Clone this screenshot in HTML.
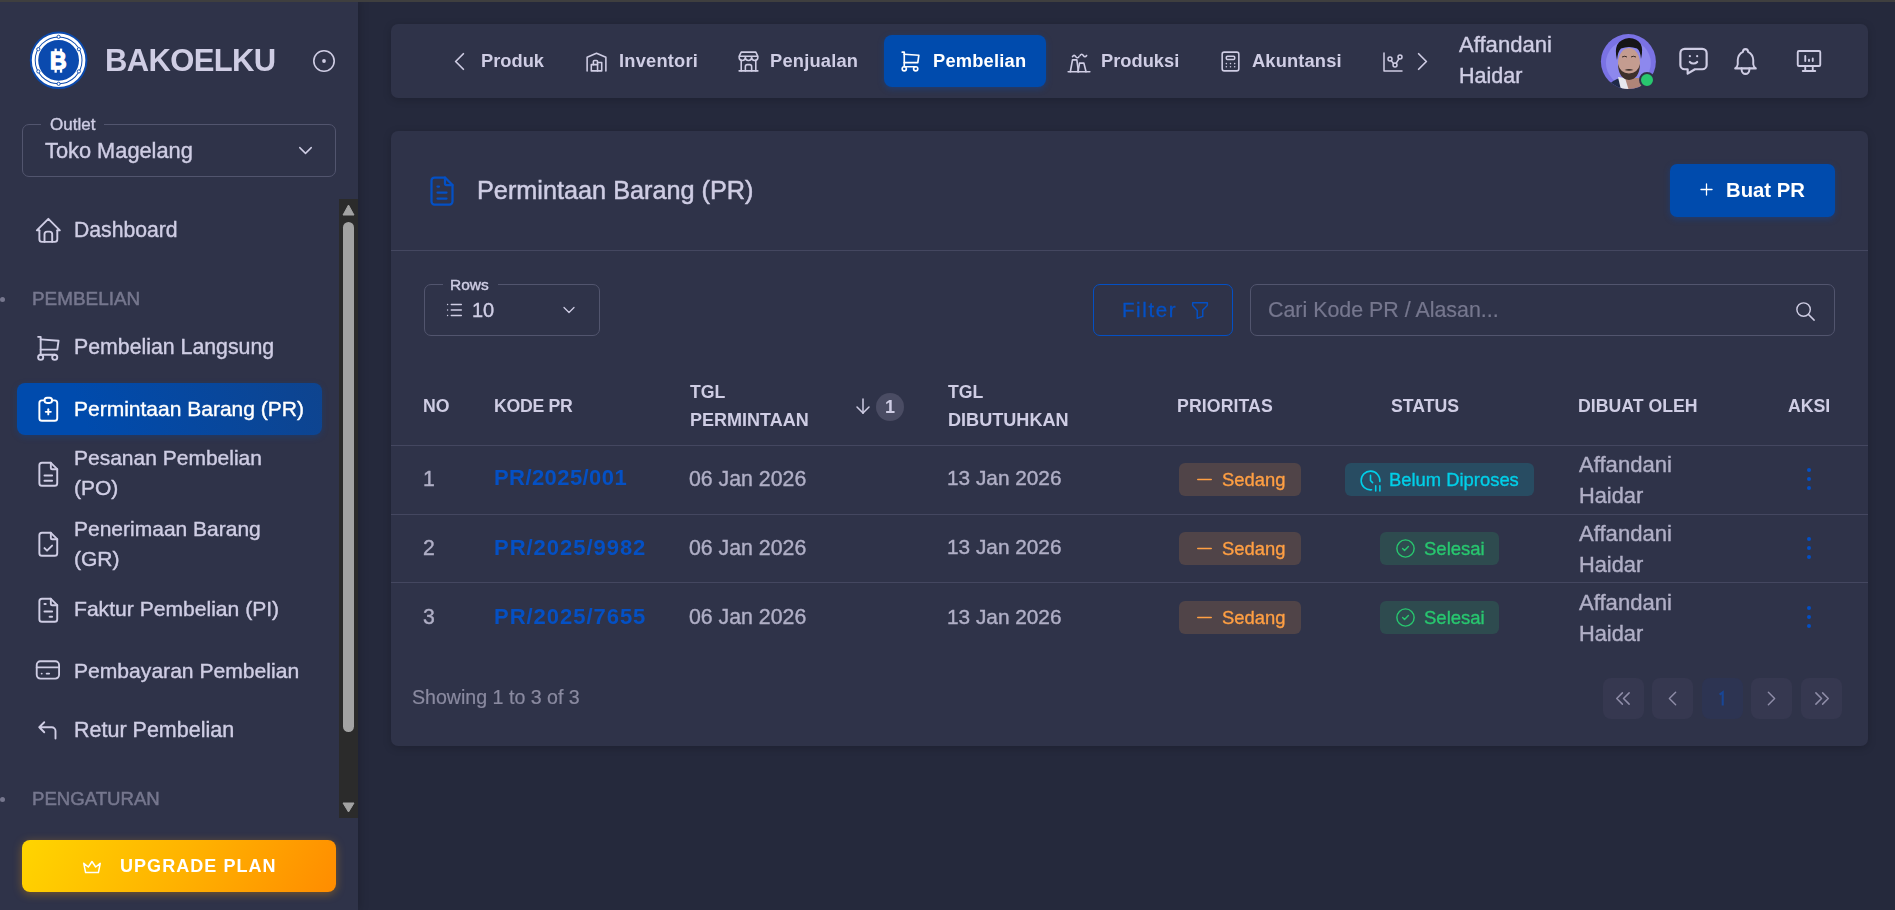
<!DOCTYPE html>
<html><head><meta charset="utf-8"><style>
html,body{margin:0;padding:0;width:1895px;height:910px;overflow:hidden;background:#25293C;font-family:"Liberation Sans",sans-serif;}
.t{position:absolute;white-space:nowrap;will-change:transform;}
.b{position:absolute;}
.i{position:absolute;overflow:visible;}
</style></head><body>
<div class="b" style="left:0;top:0;width:1895px;height:2px;background:#3F3F3F;z-index:10"></div>
<div class="b" style="left:0px;top:0px;width:358px;height:910px;background:#2F3349;box-shadow:0 0 10px rgba(0,0,0,.25);"></div><svg class="i" style="left:29px;top:31px" width="59" height="59" viewBox="0 0 59 59">
<circle cx="29.6" cy="29.3" r="28.8" fill="#0B4AAE"/>
<circle cx="29.6" cy="29.3" r="25.35" fill="none" stroke="#fff" stroke-width="2.9"/>
<circle cx="29.6" cy="29.3" r="21.65" fill="none" stroke="#fff" stroke-width="2.5"/>
<g fill="#fff" stroke="#0B4AAE" stroke-width="0.9">
<circle cx="29.6" cy="5.8" r="1.6"/><circle cx="29.6" cy="52.8" r="1.6"/>
<circle cx="9.3" cy="18.2" r="1.6"/><circle cx="49.9" cy="18.2" r="1.6"/>
<circle cx="9.3" cy="40.4" r="1.6"/><circle cx="49.9" cy="40.4" r="1.6"/>
</g>
<text x="29.4" y="37.8" text-anchor="middle" font-family="Liberation Sans" font-weight="700" font-size="23" fill="#fff" stroke="#fff" stroke-width="1.3">B</text>
<rect x="25.5" y="17.6" width="2.3" height="4" fill="#fff"/><rect x="30.9" y="17.6" width="2.3" height="4" fill="#fff"/>
<rect x="25.5" y="38" width="2.3" height="3.7" fill="#fff"/><rect x="30.9" y="38" width="2.3" height="3.7" fill="#fff"/>
</svg><div class="t" style="left:104.50px;top:45.45px;font-size:31px;line-height:31px;color:#CFCDE4;font-weight:700;letter-spacing:-0.65px;">BAKOELKU</div><svg class="i" style="left:312px;top:49px" width="24" height="24" viewBox="0 0 24 24" fill="none" stroke="#CFCDE4" stroke-width="1.6"><circle cx="12" cy="12" r="10.2"/><circle cx="12" cy="12" r="1.9" fill="#CFCDE4" stroke="none"/></svg><div class="b" style="left:22px;top:124px;width:314px;height:53px;border:1px solid #52556E;border-radius:7px;box-sizing:border-box;"></div><div class="b" style="left:41px;top:118px;width:63px;height:12px;background:#2F3349;"></div><div class="t" style="left:49.50px;top:115.88px;font-size:17px;line-height:17px;color:#CFCDE4;font-weight:400;letter-spacing:0px;-webkit-text-stroke:0.4px #CFCDE4;">Outlet</div><div class="t" style="left:45.20px;top:139.70px;font-size:21.8px;line-height:21.8px;color:#CFCDE4;font-weight:400;letter-spacing:0px;-webkit-text-stroke:0.4px #CFCDE4;">Toko Magelang</div><svg class="i" style="left:293.5px;top:139px;" width="23.0" height="23" viewBox="0 0 24 24" preserveAspectRatio="none" fill="none" stroke="#CFCDE4" stroke-width="1.5" stroke-linecap="round" stroke-linejoin="round"><path d="M6 9l6 6l6 -6"/></svg><div class="b" style="left:339px;top:199px;width:19px;height:619px;background:#2B2B2B;"></div><div class="b" style="left:343px;top:222px;width:11px;height:510px;background:#A3A3A3;border-radius:6px;"></div><svg class="i" style="left:339px;top:199px" width="19" height="619" viewBox="0 0 19 619"><path d="M9.5 6 L15 16 L4 16 Z" fill="#A3A3A3" stroke="#A3A3A3" stroke-width="1" stroke-linejoin="round"/><path d="M9.5 613 L15 604 L4 604 Z" fill="#A3A3A3" stroke="#A3A3A3" stroke-width="1" stroke-linejoin="round"/></svg><svg class="i" style="left:32.5px;top:214.5px;" width="30.700000000000003" height="30.69999999999999" viewBox="0 0 24 24" preserveAspectRatio="none" fill="none" stroke="#CFCDE4" stroke-width="1.5" stroke-linecap="round" stroke-linejoin="round"><path d="M5 12l-2 0l9 -9l9 9l-2 0"/><path d="M5 12v7a2 2 0 0 0 2 2h10a2 2 0 0 0 2 -2v-7"/><path d="M9 21v-6a2 2 0 0 1 2 -2h2a2 2 0 0 1 2 2v6"/></svg><div class="t" style="left:73.50px;top:219.29px;font-size:21.2px;line-height:21.2px;color:#CFCDE4;font-weight:400;letter-spacing:0px;-webkit-text-stroke:0.4px #CFCDE4;">Dashboard</div><div class="b" style="left:0px;top:297px;width:5px;height:5px;background:#76778E;border-radius:50%;"></div><div class="t" style="left:32.00px;top:289.60px;font-size:18.9px;line-height:18.9px;color:#76778E;font-weight:400;letter-spacing:0px;-webkit-text-stroke:0.5px #76778E;">PEMBELIAN</div><svg class="i" style="left:32.5px;top:332.5px;" width="30.700000000000003" height="30.69999999999999" viewBox="0 0 24 24" preserveAspectRatio="none" fill="none" stroke="#CFCDE4" stroke-width="1.5" stroke-linecap="round" stroke-linejoin="round"><path d="M6 19m-2 0a2 2 0 1 0 4 0a2 2 0 1 0 -4 0"/><path d="M17 19m-2 0a2 2 0 1 0 4 0a2 2 0 1 0 -4 0"/><path d="M17 17h-11v-14h-2"/><path d="M6 5l14 1l-1 7h-13"/></svg><div class="t" style="left:73.50px;top:337.41px;font-size:21.3px;line-height:21.3px;color:#CFCDE4;font-weight:400;letter-spacing:0px;-webkit-text-stroke:0.4px #CFCDE4;">Pembelian Langsung</div><div class="b" style="left:17px;top:383px;width:305px;height:52px;background:linear-gradient(72.5deg,#004BAD 22%,#0E448F 100%);border-radius:8px;box-shadow:0 2px 6px rgba(0,75,173,.3);"></div><svg class="i" style="left:32.7px;top:393.6px;" width="30.599999999999994" height="30.599999999999966" viewBox="0 0 24 24" preserveAspectRatio="none" fill="none" stroke="#FFFFFF" stroke-width="1.5" stroke-linecap="round" stroke-linejoin="round"><path d="M9 5h-2a2 2 0 0 0 -2 2v12a2 2 0 0 0 2 2h10a2 2 0 0 0 2 -2v-12a2 2 0 0 0 -2 -2h-2"/><path d="M9 3m0 2a2 2 0 0 1 2 -2h2a2 2 0 0 1 2 2v0a2 2 0 0 1 -2 2h-2a2 2 0 0 1 -2 -2z"/><path d="M10 14h4"/><path d="M12 12v4"/></svg><div class="t" style="left:73.50px;top:397.76px;font-size:21px;line-height:21px;color:#FFFFFF;font-weight:400;letter-spacing:0px;-webkit-text-stroke:0.4px #fff;">Permintaan Barang (PR)</div><svg class="i" style="left:32.7px;top:458.8px;" width="30.599999999999994" height="30.599999999999966" viewBox="0 0 24 24" preserveAspectRatio="none" fill="none" stroke="#CFCDE4" stroke-width="1.5" stroke-linecap="round" stroke-linejoin="round"><path d="M14 3v4a1 1 0 0 0 1 1h4"/><path d="M17 21h-10a2 2 0 0 1 -2 -2v-14a2 2 0 0 1 2 -2h7l5 5v11a2 2 0 0 1 -2 2z"/><path d="M9 13l6 0"/><path d="M9 17l6 0"/></svg><div class="t" style="left:73.50px;top:447.36px;font-size:21px;line-height:21px;color:#CFCDE4;font-weight:400;letter-spacing:0px;-webkit-text-stroke:0.4px #CFCDE4;">Pesanan Pembelian</div><div class="t" style="left:73.50px;top:477.46px;font-size:21px;line-height:21px;color:#CFCDE4;font-weight:400;letter-spacing:0px;-webkit-text-stroke:0.4px #CFCDE4;">(PO)</div><svg class="i" style="left:32.7px;top:528.6px;" width="30.599999999999994" height="30.600000000000023" viewBox="0 0 24 24" preserveAspectRatio="none" fill="none" stroke="#CFCDE4" stroke-width="1.5" stroke-linecap="round" stroke-linejoin="round"><path d="M14 3v4a1 1 0 0 0 1 1h4"/><path d="M17 21h-10a2 2 0 0 1 -2 -2v-14a2 2 0 0 1 2 -2h7l5 5v11a2 2 0 0 1 -2 2z"/><path d="M9 15l2 2l4 -4"/></svg><div class="t" style="left:73.50px;top:518.06px;font-size:21px;line-height:21px;color:#CFCDE4;font-weight:400;letter-spacing:0px;-webkit-text-stroke:0.4px #CFCDE4;">Penerimaan Barang</div><div class="t" style="left:73.50px;top:547.86px;font-size:21px;line-height:21px;color:#CFCDE4;font-weight:400;letter-spacing:0px;-webkit-text-stroke:0.4px #CFCDE4;">(GR)</div><svg class="i" style="left:32.7px;top:594.6px;" width="30.599999999999994" height="30.600000000000023" viewBox="0 0 24 24" preserveAspectRatio="none" fill="none" stroke="#CFCDE4" stroke-width="1.5" stroke-linecap="round" stroke-linejoin="round"><path d="M14 3v4a1 1 0 0 0 1 1h4"/><path d="M17 21h-10a2 2 0 0 1 -2 -2v-14a2 2 0 0 1 2 -2h7l5 5v11a2 2 0 0 1 -2 2z"/><path d="M9 7l1 0"/><path d="M9 13l6 0"/><path d="M13 17l2 0"/></svg><div class="t" style="left:73.50px;top:597.78px;font-size:21.1px;line-height:21.1px;color:#CFCDE4;font-weight:400;letter-spacing:0px;-webkit-text-stroke:0.4px #CFCDE4;">Faktur Pembelian (PI)</div><svg class="i" style="left:33.2px;top:654.9px;" width="29.799999999999997" height="29.800000000000068" viewBox="0 0 24 24" preserveAspectRatio="none" fill="none" stroke="#CFCDE4" stroke-width="1.5" stroke-linecap="round" stroke-linejoin="round"><path d="M3 5m0 3a3 3 0 0 1 3 -3h12a3 3 0 0 1 3 3v8a3 3 0 0 1 -3 3h-12a3 3 0 0 1 -3 -3z"/><path d="M3 10l18 0"/><path d="M7 15l.01 0"/><path d="M11 15l2 0"/></svg><div class="t" style="left:73.50px;top:659.68px;font-size:21.1px;line-height:21.1px;color:#CFCDE4;font-weight:400;letter-spacing:0px;-webkit-text-stroke:0.4px #CFCDE4;">Pembayaran Pembelian</div><svg class="i" style="left:32.5px;top:715.5px;" width="30.0" height="30.0" viewBox="0 0 24 24" preserveAspectRatio="none" fill="none" stroke="#CFCDE4" stroke-width="1.5" stroke-linecap="round" stroke-linejoin="round"><path d="M18 18v-6a3 3 0 0 0 -3 -3h-10l4 -4m0 8l-4 -4"/></svg><div class="t" style="left:73.50px;top:719.74px;font-size:21.5px;line-height:21.5px;color:#CFCDE4;font-weight:400;letter-spacing:0px;-webkit-text-stroke:0.4px #CFCDE4;">Retur Pembelian</div><div class="b" style="left:0px;top:797px;width:5px;height:5px;background:#76778E;border-radius:50%;"></div><div class="t" style="left:32.00px;top:789.95px;font-size:18.6px;line-height:18.6px;color:#76778E;font-weight:400;letter-spacing:0px;-webkit-text-stroke:0.5px #76778E;">PENGATURAN</div><div class="b" style="left:22px;top:840px;width:314px;height:52px;background:linear-gradient(120deg,#FFD500 0%,#FFB300 50%,#FF8C00 100%);border-radius:8px;box-shadow:0 2px 10px rgba(255,160,0,.35);"></div><svg class="i" style="left:81px;top:856px;" width="22" height="22" viewBox="0 0 24 24" preserveAspectRatio="none" fill="none" stroke="#FFFFFF" stroke-width="1.6" stroke-linecap="round" stroke-linejoin="round"><path d="M12 6l4 6l5 -4l-2 10h-14l-2 -10l5 4z"/></svg><div class="t" style="left:119.70px;top:857.05px;font-size:18px;line-height:18px;color:#FFFFFF;font-weight:700;letter-spacing:1.05px;">UPGRADE PLAN</div><div class="b" style="left:391px;top:24px;width:1477px;height:74px;background:#2F3349;border-radius:7px;box-shadow:0 2px 8px rgba(0,0,0,.18);"></div><svg class="i" style="left:443.5px;top:46px;" width="31.0" height="31" viewBox="0 0 24 24" preserveAspectRatio="none" fill="none" stroke="#CFCDE4" stroke-width="1.35" stroke-linecap="round" stroke-linejoin="round"><path d="M15 6l-6 6l6 6"/></svg><div class="t" style="left:480.50px;top:52.10px;font-size:18.3px;line-height:18.3px;color:#CFCDE4;font-weight:700;letter-spacing:0px;">Produk</div><svg class="i" style="left:584px;top:48.6px;" width="25" height="24.999999999999993" viewBox="0 0 24 24" preserveAspectRatio="none" fill="none" stroke="#CFCDE4" stroke-width="1.5" stroke-linecap="round" stroke-linejoin="round"><path d="M3 21v-13l9 -4l9 4v13"/><path d="M13 13h4v8h-10v-6h6"/><path d="M13 21v-9a1 1 0 0 0 -1 -1h-2a1 1 0 0 0 -1 1v3"/></svg><div class="t" style="left:618.60px;top:52.10px;font-size:18.3px;line-height:18.3px;color:#CFCDE4;font-weight:700;letter-spacing:0.2px;">Inventori</div><svg class="i" style="left:736px;top:49px;" width="25" height="25" viewBox="0 0 24 24" preserveAspectRatio="none" fill="none" stroke="#CFCDE4" stroke-width="1.5" stroke-linecap="round" stroke-linejoin="round"><path d="M3 21l18 0"/><path d="M3 7v1a3 3 0 0 0 6 0v-1m0 1a3 3 0 0 0 6 0v-1m0 1a3 3 0 0 0 6 0v-1h-18l2 -4h14l2 4"/><path d="M5 21l0 -10.15"/><path d="M19 21l0 -10.15"/><path d="M9 21v-4a2 2 0 0 1 2 -2h2a2 2 0 0 1 2 2v4"/></svg><div class="t" style="left:770.20px;top:52.10px;font-size:18.3px;line-height:18.3px;color:#CFCDE4;font-weight:700;letter-spacing:0.2px;">Penjualan</div><div class="b" style="left:884px;top:35px;width:162px;height:52px;background:#004BAD;border-radius:8px;box-shadow:0 2px 6px rgba(11,74,174,.4);"></div><svg class="i" style="left:898px;top:49px;" width="25" height="25" viewBox="0 0 24 24" preserveAspectRatio="none" fill="none" stroke="#FFFFFF" stroke-width="1.6" stroke-linecap="round" stroke-linejoin="round"><path d="M6 19m-2 0a2 2 0 1 0 4 0a2 2 0 1 0 -4 0"/><path d="M17 19m-2 0a2 2 0 1 0 4 0a2 2 0 1 0 -4 0"/><path d="M17 17h-11v-14h-2"/><path d="M6 5l14 1l-1 7h-13"/></svg><div class="t" style="left:932.60px;top:52.10px;font-size:18.3px;line-height:18.3px;color:#FFFFFF;font-weight:700;letter-spacing:0.2px;">Pembelian</div><svg class="i" style="left:1066px;top:49px;" width="26" height="26" viewBox="0 0 24 24" preserveAspectRatio="none" fill="none" stroke="#CFCDE4" stroke-width="1.5" stroke-linecap="round" stroke-linejoin="round"><path d="M2 21h20"/><path d="M4 21l2 -11h4l1.5 11"/><path d="M11 21l1.5 -8h4l2 8"/><path d="M6 7c1 -1.5 2 -1.5 3 0s2 1.5 3 0"/><path d="M13 6c1 -1.5 2 -1.5 3 0s2 1.5 3 0"/></svg><div class="t" style="left:1100.50px;top:52.10px;font-size:18.3px;line-height:18.3px;color:#CFCDE4;font-weight:700;letter-spacing:0px;">Produksi</div><svg class="i" style="left:1218px;top:49px;" width="25" height="25" viewBox="0 0 24 24" preserveAspectRatio="none" fill="none" stroke="#CFCDE4" stroke-width="1.5" stroke-linecap="round" stroke-linejoin="round"><path d="M4 3m0 2a2 2 0 0 1 2 -2h12a2 2 0 0 1 2 2v14a2 2 0 0 1 -2 2h-12a2 2 0 0 1 -2 -2z"/><path d="M8 7m0 1a1 1 0 0 1 1 -1h6a1 1 0 0 1 1 1v1a1 1 0 0 1 -1 1h-6a1 1 0 0 1 -1 -1z"/><path d="M8 14l0 .01"/><path d="M12 14l0 .01"/><path d="M16 14l0 .01"/><path d="M8 17l0 .01"/><path d="M12 17l0 .01"/><path d="M16 17l0 .01"/></svg><div class="t" style="left:1252.20px;top:52.10px;font-size:18.3px;line-height:18.3px;color:#CFCDE4;font-weight:700;letter-spacing:0.15px;">Akuntansi</div><svg class="i" style="left:1381px;top:50px;" width="24" height="24" viewBox="0 0 24 24" preserveAspectRatio="none" fill="none" stroke="#CFCDE4" stroke-width="1.5" stroke-linecap="round" stroke-linejoin="round"><path d="M3 3v18h18"/><path d="M9 9m-2 0a2 2 0 1 0 4 0a2 2 0 1 0 -4 0"/><path d="M19 7m-2 0a2 2 0 1 0 4 0a2 2 0 1 0 -4 0"/><path d="M14 15m-2 0a2 2 0 1 0 4 0a2 2 0 1 0 -4 0"/><path d="M10.16 10.62l2.34 2.88"/><path d="M15.088 13.328l2.837 -4.586"/></svg><svg class="i" style="left:1407px;top:46px;" width="31" height="31" viewBox="0 0 24 24" preserveAspectRatio="none" fill="none" stroke="#CFCDE4" stroke-width="1.35" stroke-linecap="round" stroke-linejoin="round"><path d="M9 6l6 6l-6 6"/></svg><div class="t" style="left:1459.00px;top:34.25px;font-size:22.1px;line-height:22.1px;color:#CFCDE4;font-weight:400;letter-spacing:0px;-webkit-text-stroke:0.4px #CFCDE4;">Affandani</div><div class="t" style="left:1459.00px;top:65.94px;font-size:21.5px;line-height:21.5px;color:#CFCDE4;font-weight:400;letter-spacing:0px;-webkit-text-stroke:0.4px #CFCDE4;">Haidar</div><svg class="i" style="left:1600px;top:34px" width="57" height="57" viewBox="0 0 57 57">
<defs><clipPath id="av"><circle cx="28.4" cy="27.6" r="27.5"/></clipPath></defs>
<circle cx="28.4" cy="27.6" r="27.5" fill="#7A72E4"/>
<g clip-path="url(#av)">
<circle cx="28.4" cy="29" r="22.5" fill="#8D88EE"/>
<path d="M24 44 L41 44 L46 60 L22 60 Z" fill="#B08578"/>
<path d="M4 60 Q6 50 17 45 L21 44 L26 60 Z" fill="#1F2A48"/>
<path d="M18 43 L25 44 L30 60 L22 60 Z" fill="#E8E8EE"/>
<ellipse cx="29" cy="29" rx="11" ry="15" fill="#C49C90"/>
<path d="M18 30 Q18.5 45 29 46 Q39.5 45 40 30 Q38 39 29 39.5 Q20 39 18 30 Z" fill="#3E302C"/>
<path d="M24.5 36 Q29 34 33.5 36 Q29 37.5 24.5 36Z" fill="#3E302C"/>
<path d="M17 26 Q12 6 29 4 Q46 5 41 25 Q40.5 17 37 14.5 Q29 11.5 21 14.5 Q18 17 17 26 Z" fill="#161517"/>
<path d="M22 23 Q25 21.5 27 23" stroke="#3a2b26" stroke-width="1" fill="none"/><path d="M31 23 Q33 21.5 36 23" stroke="#3a2b26" stroke-width="1" fill="none"/>
</g>
</svg><div class="b" style="left:1638.5px;top:71.5px;width:16.0px;height:16.0px;background:#28C76F;border:2.5px solid #2F3349;border-radius:50%;box-sizing:border-box;"></div><svg class="i" style="left:1676px;top:43.2px;" width="35" height="35.0" viewBox="0 0 24 24" preserveAspectRatio="none" fill="none" stroke="#CFCDE4" stroke-width="1.5" stroke-linecap="round" stroke-linejoin="round"><path d="M18 4a3 3 0 0 1 3 3v8a3 3 0 0 1 -3 3h-5l-5 3v-3h-2a3 3 0 0 1 -3 -3v-8a3 3 0 0 1 3 -3h12z"/><path d="M9.5 9h.01"/><path d="M14.5 9h.01"/><path d="M9.5 13a3.5 3.5 0 0 0 5 0"/></svg><svg class="i" style="left:1730px;top:45px;" width="31" height="33" viewBox="0 0 24 24" preserveAspectRatio="none" fill="none" stroke="#CFCDE4" stroke-width="1.5" stroke-linecap="round" stroke-linejoin="round"><path d="M10 5a2 2 0 1 1 4 0a7 7 0 0 1 4 6v3a4 4 0 0 0 2 3h-16a4 4 0 0 0 2 -3v-3a7 7 0 0 1 4 -6"/><path d="M9 17v1a3 3 0 0 0 6 0v-1"/></svg><svg class="i" style="left:1794px;top:46.2px;" width="30" height="30.0" viewBox="0 0 24 24" preserveAspectRatio="none" fill="none" stroke="#CFCDE4" stroke-width="1.5" stroke-linecap="round" stroke-linejoin="round"><path d="M3 4m0 1a1 1 0 0 1 1 -1h16a1 1 0 0 1 1 1v10a1 1 0 0 1 -1 1h-16a1 1 0 0 1 -1 -1z"/><path d="M7 20h10"/><path d="M9 16v4"/><path d="M15 16v4"/><path d="M9 12v-4"/><path d="M12 12v-1"/><path d="M15 12v-2"/></svg><div class="b" style="left:391px;top:131px;width:1477px;height:615px;background:#2F3349;border-radius:7px;box-shadow:0 2px 8px rgba(0,0,0,.18);"></div><svg class="i" style="left:424px;top:173px;" width="36" height="36" viewBox="0 0 24 24" preserveAspectRatio="none" fill="none" stroke="#0450C4" stroke-width="1.5" stroke-linecap="round" stroke-linejoin="round"><path d="M14 3v4a1 1 0 0 0 1 1h4"/><path d="M17 21h-10a2 2 0 0 1 -2 -2v-14a2 2 0 0 1 2 -2h7l5 5v11a2 2 0 0 1 -2 2z"/><path d="M9 9l1 0"/><path d="M9 13l6 0"/><path d="M9 17l6 0"/></svg><div class="t" style="left:477.00px;top:177.53px;font-size:25.25px;line-height:25.25px;color:#CFCDE4;font-weight:400;letter-spacing:0px;-webkit-text-stroke:0.5px #CFCDE4;">Permintaan Barang (PR)</div><div class="b" style="left:1670px;top:164px;width:165px;height:53px;background:#004BAD;border-radius:7px;box-shadow:0 2px 6px rgba(11,74,174,.4);"></div><svg class="i" style="left:1696.5px;top:180px;" width="19.0" height="19" viewBox="0 0 24 24" preserveAspectRatio="none" fill="none" stroke="#FFFFFF" stroke-width="1.6" stroke-linecap="round" stroke-linejoin="round"><path d="M12 5l0 14"/><path d="M5 12l14 0"/></svg><div class="t" style="left:1725.50px;top:180.24px;font-size:20.3px;line-height:20.3px;color:#FFFFFF;font-weight:700;letter-spacing:0px;">Buat PR</div><div class="b" style="left:391px;top:250px;width:1477px;height:1px;background:#444760;"></div><div class="b" style="left:424px;top:284px;width:176px;height:52px;border:1px solid #52556E;border-radius:7px;box-sizing:border-box;"></div><div class="b" style="left:443px;top:278px;width:55px;height:12px;background:#2F3349;"></div><div class="t" style="left:450.00px;top:277.13px;font-size:15.5px;line-height:15.5px;color:#CFCDE4;font-weight:400;letter-spacing:0px;-webkit-text-stroke:0.4px #CFCDE4;">Rows</div><svg class="i" style="left:443px;top:299px;" width="22" height="22" viewBox="0 0 24 24" preserveAspectRatio="none" fill="none" stroke="#CFCDE4" stroke-width="1.5" stroke-linecap="round" stroke-linejoin="round"><path d="M9 6l11 0"/><path d="M9 12l11 0"/><path d="M9 18l11 0"/><path d="M5 6l0 .01"/><path d="M5 12l0 .01"/><path d="M5 18l0 .01"/></svg><div class="t" style="left:471.50px;top:300.19px;font-size:20px;line-height:20px;color:#CFCDE4;font-weight:400;letter-spacing:0px;-webkit-text-stroke:0.4px #CFCDE4;">10</div><svg class="i" style="left:559px;top:300px;" width="20" height="20" viewBox="0 0 24 24" preserveAspectRatio="none" fill="none" stroke="#CFCDE4" stroke-width="1.5" stroke-linecap="round" stroke-linejoin="round"><path d="M6 9l6 6l6 -6"/></svg><div class="b" style="left:1093px;top:284px;width:140px;height:52px;border:1.5px solid #0450C4;border-radius:7px;box-sizing:border-box;"></div><div class="t" style="left:1122.30px;top:300.17px;font-size:20.5px;line-height:20.5px;color:#0450C4;font-weight:400;letter-spacing:1.6px;-webkit-text-stroke:0.3px #0450C4;">Filter</div><svg class="i" style="left:1189px;top:298.6px;" width="22" height="22.0" viewBox="0 0 24 24" preserveAspectRatio="none" fill="none" stroke="#0450C4" stroke-width="1.6" stroke-linecap="round" stroke-linejoin="round"><path d="M4 4h16v2.172a2 2 0 0 1 -.586 1.414l-4.414 4.414v7l-6 2v-8.5l-4.48 -4.928a2 2 0 0 1 -.52 -1.345v-2.227z"/></svg><div class="b" style="left:1250px;top:284px;width:585px;height:52px;border:1px solid #52556E;border-radius:7px;box-sizing:border-box;"></div><div class="t" style="left:1268.30px;top:299.73px;font-size:21.4px;line-height:21.4px;color:#76778E;font-weight:400;letter-spacing:0px;-webkit-text-stroke:0.2px #76778E;">Cari Kode PR / Alasan...</div><svg class="i" style="left:1794px;top:299.5px;" width="23" height="23.0" viewBox="0 0 24 24" preserveAspectRatio="none" fill="none" stroke="#CFCDE4" stroke-width="1.5" stroke-linecap="round" stroke-linejoin="round"><path d="M10 10m-7 0a7 7 0 1 0 14 0a7 7 0 1 0 -14 0"/><path d="M21 21l-6 -6"/></svg><div class="t" style="left:422.50px;top:398.10px;font-size:17.7px;line-height:17.7px;color:#CFCDE4;font-weight:700;letter-spacing:0px;">NO</div><div class="t" style="left:494.00px;top:398.10px;font-size:17.7px;line-height:17.7px;color:#CFCDE4;font-weight:700;letter-spacing:-0.3px;">KODE PR</div><div class="t" style="left:689.50px;top:384.40px;font-size:17.7px;line-height:17.7px;color:#CFCDE4;font-weight:700;letter-spacing:0px;">TGL</div><div class="t" style="left:689.50px;top:411.15px;font-size:18.0px;line-height:18.0px;color:#CFCDE4;font-weight:700;letter-spacing:0px;">PERMINTAAN</div><svg class="i" style="left:851px;top:394px;" width="24" height="24" viewBox="0 0 24 24" preserveAspectRatio="none" fill="none" stroke="#CFCDE4" stroke-width="1.5" stroke-linecap="round" stroke-linejoin="round"><path d="M12 5l0 14"/><path d="M18 13l-6 6"/><path d="M6 13l6 6"/></svg><div class="b" style="left:876px;top:393px;width:28px;height:28px;background:#4A4C63;border-radius:50%;"></div><div class="t" style="left:885.00px;top:398.35px;font-size:18px;line-height:18px;color:#CFCDE4;font-weight:700;letter-spacing:0px;">1</div><div class="t" style="left:947.50px;top:384.40px;font-size:17.7px;line-height:17.7px;color:#CFCDE4;font-weight:700;letter-spacing:0px;">TGL</div><div class="t" style="left:947.50px;top:411.07px;font-size:18.1px;line-height:18.1px;color:#CFCDE4;font-weight:700;letter-spacing:0px;">DIBUTUHKAN</div><div class="t" style="left:1177.30px;top:398.10px;font-size:17.7px;line-height:17.7px;color:#CFCDE4;font-weight:700;letter-spacing:0.1px;">PRIORITAS</div><div class="t" style="left:1391.30px;top:398.10px;font-size:17.7px;line-height:17.7px;color:#CFCDE4;font-weight:700;letter-spacing:0px;">STATUS</div><div class="t" style="left:1577.50px;top:398.10px;font-size:17.7px;line-height:17.7px;color:#CFCDE4;font-weight:700;letter-spacing:0px;">DIBUAT OLEH</div><div class="t" style="left:1787.50px;top:398.10px;font-size:17.7px;line-height:17.7px;color:#CFCDE4;font-weight:700;letter-spacing:0px;">AKSI</div><div class="b" style="left:391px;top:445px;width:1477px;height:1px;background:#444760;"></div><div class="b" style="left:391px;top:514px;width:1477px;height:1px;background:#444760;"></div><div class="b" style="left:391px;top:582px;width:1477px;height:1px;background:#444760;"></div><div class="t" style="left:422.80px;top:467.69px;font-size:21.2px;line-height:21.2px;color:#B0AFC6;font-weight:400;letter-spacing:0px;-webkit-text-stroke:0.4px #B0AFC6;">1</div><div class="t" style="left:494.20px;top:467.33px;font-size:22px;line-height:22px;color:#0450C4;font-weight:700;letter-spacing:0.42px;">PR/2025/001</div><div class="t" style="left:689.30px;top:468.51px;font-size:21.3px;line-height:21.3px;color:#B0AFC6;font-weight:400;letter-spacing:0px;-webkit-text-stroke:0.4px #B0AFC6;">06 Jan 2026</div><div class="t" style="left:946.60px;top:468.23px;font-size:20.8px;line-height:20.8px;color:#B0AFC6;font-weight:400;letter-spacing:0px;-webkit-text-stroke:0.4px #B0AFC6;">13 Jan 2026</div><div class="b" style="left:1179px;top:463px;width:122px;height:33px;background:#504448;border-radius:6px;"></div><svg class="i" style="left:1193px;top:468px;" width="23" height="23" viewBox="0 0 24 24" preserveAspectRatio="none" fill="none" stroke="#FF9F43" stroke-width="1.6" stroke-linecap="round" stroke-linejoin="round"><path d="M5 12l14 0"/></svg><div class="t" style="left:1222.30px;top:470.62px;font-size:18.4px;line-height:18.4px;color:#FF9F43;font-weight:400;letter-spacing:0px;-webkit-text-stroke:0.35px #FF9F43;">Sedang</div><div class="b" style="left:1345px;top:463px;width:189px;height:33px;background:#284C62;border-radius:6px;"></div><svg class="i" style="left:1358px;top:468px;" width="25" height="25" viewBox="0 0 24 24" preserveAspectRatio="none" fill="none" stroke="#00CFE8" stroke-width="1.5" stroke-linecap="round" stroke-linejoin="round"><path d="M20.942 13.018a9 9 0 1 0 -7.909 7.922"/><path d="M12 7v5l2 2"/><path d="M17 17v5"/><path d="M21 17v5"/></svg><div class="t" style="left:1388.80px;top:470.62px;font-size:18.4px;line-height:18.4px;color:#00CFE8;font-weight:400;letter-spacing:0px;-webkit-text-stroke:0.35px #00CFE8;">Belum Diproses</div><div class="t" style="left:1578.50px;top:453.55px;font-size:22.1px;line-height:22.1px;color:#B0AFC6;font-weight:400;letter-spacing:0px;-webkit-text-stroke:0.4px #B0AFC6;">Affandani</div><div class="t" style="left:1578.50px;top:484.80px;font-size:21.8px;line-height:21.8px;color:#B0AFC6;font-weight:400;letter-spacing:0px;-webkit-text-stroke:0.4px #B0AFC6;">Haidar</div><div class="b" style="left:1806.8px;top:467.8px;width:4.400000000000091px;height:4.399999999999977px;background:#0450C4;border-radius:50%;"></div><div class="b" style="left:1806.8px;top:476.8px;width:4.400000000000091px;height:4.399999999999977px;background:#0450C4;border-radius:50%;"></div><div class="b" style="left:1806.8px;top:485.8px;width:4.400000000000091px;height:4.399999999999977px;background:#0450C4;border-radius:50%;"></div><div class="t" style="left:422.80px;top:536.89px;font-size:21.2px;line-height:21.2px;color:#B0AFC6;font-weight:400;letter-spacing:0px;-webkit-text-stroke:0.4px #B0AFC6;">2</div><div class="t" style="left:494.20px;top:536.53px;font-size:22px;line-height:22px;color:#0450C4;font-weight:700;letter-spacing:0.97px;">PR/2025/9982</div><div class="t" style="left:689.30px;top:537.71px;font-size:21.3px;line-height:21.3px;color:#B0AFC6;font-weight:400;letter-spacing:0px;-webkit-text-stroke:0.4px #B0AFC6;">06 Jan 2026</div><div class="t" style="left:946.60px;top:537.43px;font-size:20.8px;line-height:20.8px;color:#B0AFC6;font-weight:400;letter-spacing:0px;-webkit-text-stroke:0.4px #B0AFC6;">13 Jan 2026</div><div class="b" style="left:1179px;top:532px;width:122px;height:33px;background:#504448;border-radius:6px;"></div><svg class="i" style="left:1193px;top:537px;" width="23" height="23" viewBox="0 0 24 24" preserveAspectRatio="none" fill="none" stroke="#FF9F43" stroke-width="1.6" stroke-linecap="round" stroke-linejoin="round"><path d="M5 12l14 0"/></svg><div class="t" style="left:1222.30px;top:539.82px;font-size:18.4px;line-height:18.4px;color:#FF9F43;font-weight:400;letter-spacing:0px;-webkit-text-stroke:0.35px #FF9F43;">Sedang</div><div class="b" style="left:1380px;top:532px;width:119px;height:33px;background:#2E4B4F;border-radius:6px;"></div><svg class="i" style="left:1394px;top:537px;" width="23" height="23" viewBox="0 0 24 24" preserveAspectRatio="none" fill="none" stroke="#28C76F" stroke-width="1.5" stroke-linecap="round" stroke-linejoin="round"><path d="M12 12m-9 0a9 9 0 1 0 18 0a9 9 0 1 0 -18 0"/><path d="M9 12l2 2l4 -4"/></svg><div class="t" style="left:1423.50px;top:539.74px;font-size:18.5px;line-height:18.5px;color:#28C76F;font-weight:400;letter-spacing:0px;-webkit-text-stroke:0.35px #28C76F;">Selesai</div><div class="t" style="left:1578.50px;top:522.75px;font-size:22.1px;line-height:22.1px;color:#B0AFC6;font-weight:400;letter-spacing:0px;-webkit-text-stroke:0.4px #B0AFC6;">Affandani</div><div class="t" style="left:1578.50px;top:554.00px;font-size:21.8px;line-height:21.8px;color:#B0AFC6;font-weight:400;letter-spacing:0px;-webkit-text-stroke:0.4px #B0AFC6;">Haidar</div><div class="b" style="left:1806.8px;top:536.8px;width:4.400000000000091px;height:4.400000000000091px;background:#0450C4;border-radius:50%;"></div><div class="b" style="left:1806.8px;top:545.8px;width:4.400000000000091px;height:4.400000000000091px;background:#0450C4;border-radius:50%;"></div><div class="b" style="left:1806.8px;top:554.8px;width:4.400000000000091px;height:4.400000000000091px;background:#0450C4;border-radius:50%;"></div><div class="t" style="left:422.80px;top:605.99px;font-size:21.2px;line-height:21.2px;color:#B0AFC6;font-weight:400;letter-spacing:0px;-webkit-text-stroke:0.4px #B0AFC6;">3</div><div class="t" style="left:494.20px;top:605.63px;font-size:22px;line-height:22px;color:#0450C4;font-weight:700;letter-spacing:0.97px;">PR/2025/7655</div><div class="t" style="left:689.30px;top:606.81px;font-size:21.3px;line-height:21.3px;color:#B0AFC6;font-weight:400;letter-spacing:0px;-webkit-text-stroke:0.4px #B0AFC6;">06 Jan 2026</div><div class="t" style="left:946.60px;top:606.53px;font-size:20.8px;line-height:20.8px;color:#B0AFC6;font-weight:400;letter-spacing:0px;-webkit-text-stroke:0.4px #B0AFC6;">13 Jan 2026</div><div class="b" style="left:1179px;top:601px;width:122px;height:33px;background:#504448;border-radius:6px;"></div><svg class="i" style="left:1193px;top:606px;" width="23" height="23" viewBox="0 0 24 24" preserveAspectRatio="none" fill="none" stroke="#FF9F43" stroke-width="1.6" stroke-linecap="round" stroke-linejoin="round"><path d="M5 12l14 0"/></svg><div class="t" style="left:1222.30px;top:608.92px;font-size:18.4px;line-height:18.4px;color:#FF9F43;font-weight:400;letter-spacing:0px;-webkit-text-stroke:0.35px #FF9F43;">Sedang</div><div class="b" style="left:1380px;top:601px;width:119px;height:33px;background:#2E4B4F;border-radius:6px;"></div><svg class="i" style="left:1394px;top:606px;" width="23" height="23" viewBox="0 0 24 24" preserveAspectRatio="none" fill="none" stroke="#28C76F" stroke-width="1.5" stroke-linecap="round" stroke-linejoin="round"><path d="M12 12m-9 0a9 9 0 1 0 18 0a9 9 0 1 0 -18 0"/><path d="M9 12l2 2l4 -4"/></svg><div class="t" style="left:1423.50px;top:608.84px;font-size:18.5px;line-height:18.5px;color:#28C76F;font-weight:400;letter-spacing:0px;-webkit-text-stroke:0.35px #28C76F;">Selesai</div><div class="t" style="left:1578.50px;top:591.85px;font-size:22.1px;line-height:22.1px;color:#B0AFC6;font-weight:400;letter-spacing:0px;-webkit-text-stroke:0.4px #B0AFC6;">Affandani</div><div class="t" style="left:1578.50px;top:623.10px;font-size:21.8px;line-height:21.8px;color:#B0AFC6;font-weight:400;letter-spacing:0px;-webkit-text-stroke:0.4px #B0AFC6;">Haidar</div><div class="b" style="left:1806.8px;top:605.8px;width:4.400000000000091px;height:4.400000000000091px;background:#0450C4;border-radius:50%;"></div><div class="b" style="left:1806.8px;top:614.8px;width:4.400000000000091px;height:4.400000000000091px;background:#0450C4;border-radius:50%;"></div><div class="b" style="left:1806.8px;top:623.8px;width:4.400000000000091px;height:4.400000000000091px;background:#0450C4;border-radius:50%;"></div><div class="t" style="left:411.50px;top:688.32px;font-size:19.6px;line-height:19.6px;color:#8A8AA0;font-weight:400;letter-spacing:0px;-webkit-text-stroke:0.2px #8A8AA0;">Showing 1 to 3 of 3</div><div class="b" style="left:1603px;top:678px;width:41px;height:41px;background:#363850;border-radius:8px;"></div><svg class="i" style="left:1610px;top:685px;" width="27" height="27" viewBox="0 0 24 24" preserveAspectRatio="none" fill="none" stroke="#8F8DA8" stroke-width="1.35" stroke-linecap="round" stroke-linejoin="round"><path d="M11 7l-5 5l5 5"/><path d="M17 7l-5 5l5 5"/></svg><div class="b" style="left:1652px;top:678px;width:41px;height:41px;background:#363850;border-radius:8px;"></div><svg class="i" style="left:1660px;top:686px;" width="25" height="25" viewBox="0 0 24 24" preserveAspectRatio="none" fill="none" stroke="#8F8DA8" stroke-width="1.4" stroke-linecap="round" stroke-linejoin="round"><path d="M15 6l-6 6l6 6"/></svg><div class="b" style="left:1702px;top:678px;width:41px;height:41px;background:#2D3452;border-radius:8px;"></div><svg class="i" style="left:1702px;top:678px" width="41" height="41" viewBox="0 0 41 41"><path d="M17.6 16.6 L20.7 14.3 L20.7 27.6" fill="none" stroke="#194695" stroke-width="2.1" stroke-linecap="butt" stroke-linejoin="miter"/></svg><div class="b" style="left:1751px;top:678px;width:41px;height:41px;background:#363850;border-radius:8px;"></div><svg class="i" style="left:1759px;top:686px;" width="25" height="25" viewBox="0 0 24 24" preserveAspectRatio="none" fill="none" stroke="#8F8DA8" stroke-width="1.4" stroke-linecap="round" stroke-linejoin="round"><path d="M9 6l6 6l-6 6"/></svg><div class="b" style="left:1801px;top:678px;width:41px;height:41px;background:#363850;border-radius:8px;"></div><svg class="i" style="left:1808px;top:685px;" width="27" height="27" viewBox="0 0 24 24" preserveAspectRatio="none" fill="none" stroke="#8F8DA8" stroke-width="1.35" stroke-linecap="round" stroke-linejoin="round"><path d="M7 7l5 5l-5 5"/><path d="M13 7l5 5l-5 5"/></svg>
</body></html>
